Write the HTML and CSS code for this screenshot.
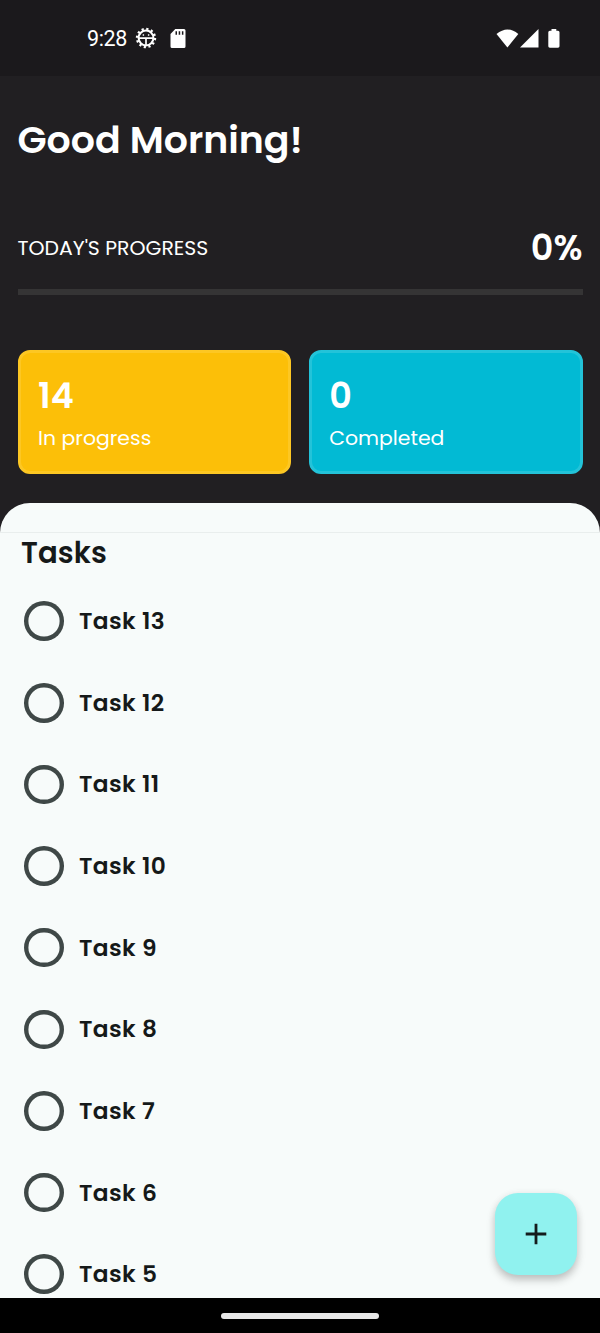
FILE: index.html
```html
<!DOCTYPE html>
<html lang="en">
<head>
<meta charset="utf-8">
<title>Tasks</title>
<link rel="stylesheet" href="styles.css">
</head>
<body>
<div class="phone">
  <header class="status">
    <div class="status-left">
      <span class="clock">9:28</span>
      <svg class="debug" width="22" height="22" viewBox="0 0 22 22" fill="none" stroke="#fff">
        <circle cx="11" cy="11" r="9" stroke-width="2.4" stroke-dasharray="2.2 2.51"/>
        <circle cx="11" cy="11" r="7.4" stroke-width="2"/>
        <path d="M4 11.2h14M11 11.500V18" stroke-width="1.7"/>
        <path d="M7.700 8h1.400M12.900 8h1.400" stroke-width="1.400"/>
      </svg>
      <svg width="16" height="19" viewBox="0 0 16 19">
        <path fill="#fff" fill-rule="evenodd" d="M5.300 0H14q1.500 0 1.500 1.500v16Q15.500 19 14 19H2Q.5 19 .5 17.500V5zM5.500 2.300v3.400h1.500V2.300zM8.700 2.300v3.400h1.500V2.300zM11.900 2.300v3.400h1.500V2.300z"/>
      </svg>
    </div>
    <div class="status-right">
      <svg width="23" height="19" viewBox="0 0 23 19"><path fill="#fff" d="M.5 5Q11.500-4 22.300 5L11.400 18.500z"/></svg>
      <svg width="19" height="19" viewBox="0 0 19 19"><path fill="#fff" d="M18.500 0v18.500H0z"/></svg>
      <svg width="12" height="19" viewBox="0 0 12 19"><path fill="#fff" d="M3.500 0h4.800v1.800H10q1.500 0 1.500 1.500v14q0 1.400-1.500 1.400H1.800Q.3 18.700.3 17.300v-14Q.3 1.800 1.800 1.800h1.700z"/></svg>
    </div>
  </header>

  <section class="summary">
    <h1 class="greeting">Good Morning!</h1>
    <div class="progress-head">
      <span class="progress-label">TODAY'S PROGRESS</span>
      <span class="progress-value">0%</span>
    </div>
    <div class="track"></div>
    <div class="cards">
      <div class="card card-active"><strong class="count">14</strong><span class="card-label">In progress</span></div>
      <div class="card card-done"><strong class="count">0</strong><span class="card-label">Completed</span></div>
    </div>
  </section>

  <main class="sheet">
    <div class="sheet-top"></div>
    <h2 class="title">Tasks</h2>
    <ul class="tasks">
      <li class="task"><span class="check"></span><span class="name">Task 13</span></li>
      <li class="task"><span class="check"></span><span class="name">Task 12</span></li>
      <li class="task"><span class="check"></span><span class="name">Task 11</span></li>
      <li class="task"><span class="check"></span><span class="name">Task 10</span></li>
      <li class="task"><span class="check"></span><span class="name">Task 9</span></li>
      <li class="task"><span class="check"></span><span class="name">Task 8</span></li>
      <li class="task"><span class="check"></span><span class="name">Task 7</span></li>
      <li class="task"><span class="check"></span><span class="name">Task 6</span></li>
      <li class="task"><span class="check"></span><span class="name">Task 5</span></li>
    </ul>
  </main>

  <button class="fab" aria-label="Add task">
    <svg width="22" height="22" viewBox="0 0 22 22"><path d="M11 .7v20.600M.7 11h20.600" stroke="#141c1c" stroke-width="2.800"/></svg>
  </button>
  <footer class="navbar"><span class="handle"></span></footer>
</div>
</body>
</html>
```
FILE: styles.css
```css
* { box-sizing: border-box; }
body { margin: 0; font-family: Poppins, Inter, "Open Sans", sans-serif; }
.phone {
  position: relative;
  width: 600px;
  height: 1333px;
  display: flex;
  flex-direction: column;
  overflow: hidden;
  background: #211f22;
  color: #fff;
}
.status {
  height: 76px;
  flex: none;
  display: flex;
  justify-content: space-between;
  align-items: center;
  padding: 0 40.500px 0 87px;
  background: #1b191c;
}
.status-left, .status-right { display: flex; align-items: center; }
.clock { width: 48px; padding-top: 1px; font: 400 21.500px/24px Roboto, sans-serif; letter-spacing: -0.4px; white-space: nowrap; }
.debug { margin-right: 13px; }
.status-right svg:nth-child(2) { margin: 0 9px 0 1px; }

.summary { flex: none; height: 427px; padding: 40px 17.500px 0; }
.greeting { margin: 0; font-size: 37.900px; line-height: 48px; font-weight: 600; }
.progress-head { display: flex; justify-content: space-between; align-items: center; height: 48px; margin-top: 59px; }
.progress-label { font-size: 20.400px; line-height: 48px; padding-top: 1px; }
.progress-value { font-size: 35px; line-height: 48px; padding-top: 1px; font-weight: 600; }
.track { height: 6px; margin-top: 18px; background: #353435; }
.cards { display: grid; grid-template-columns: 1fr 1fr; gap: 17.500px; margin-top: 55px; }
.card {
  height: 124px;
  padding: 22px 17.500px 0;
  border: 3px solid;
  border-radius: 12px;
  display: flex;
  flex-direction: column;
}
.card-active { background: #fcbf08; border-color: #fdc723; }
.card-done { background: #02bad4; border-color: #23c3d9; }
.count { font-size: 35px; line-height: 42px; font-weight: 600; }
.card-label { font-size: 20.400px; line-height: 42px; font-weight: 400; }

.sheet { flex: 1; min-height: 0; overflow: hidden; border-radius: 30px 30px 0 0; background: #f7fbfa; color: #151919; }
.sheet-top { height: 30px; border-bottom: 1px solid #e9eeed; }
.title { margin: 0; padding: 0 21px; font-size: 29.200px; line-height: 40px; font-weight: 600; letter-spacing: 0.1px; }
.tasks { list-style: none; margin: 7.300px 0 0; padding: 0; }
.task { display: flex; align-items: center; height: 81.650px; padding-left: 24px; }
.check { flex: none; width: 39.500px; height: 39.500px; box-shadow: inset 0 0 0 4.400px #3f4847; border-radius: 50%; margin-right: 15.500px; }
.name { font-size: 23.300px; line-height: 30px; font-weight: 600; letter-spacing: 0.380px; }

.fab {
  position: absolute;
  left: 495px;
  top: 1193px;
  width: 81.500px;
  height: 81.500px;
  padding: 0;
  border: 0;
  border-radius: 23px;
  background: #90f2ef;
  box-shadow: 0 5px 8px rgba(0, 0, 0, 0.22), 0 1px 8px rgba(0, 0, 0, 0.06);
  display: flex;
  align-items: center;
  justify-content: center;
}
.navbar { flex: none; height: 35px; display: flex; align-items: center; justify-content: center; background: #000; }
.handle { width: 158px; height: 6px; border-radius: 3px; background: #e8e8e8; }
```
